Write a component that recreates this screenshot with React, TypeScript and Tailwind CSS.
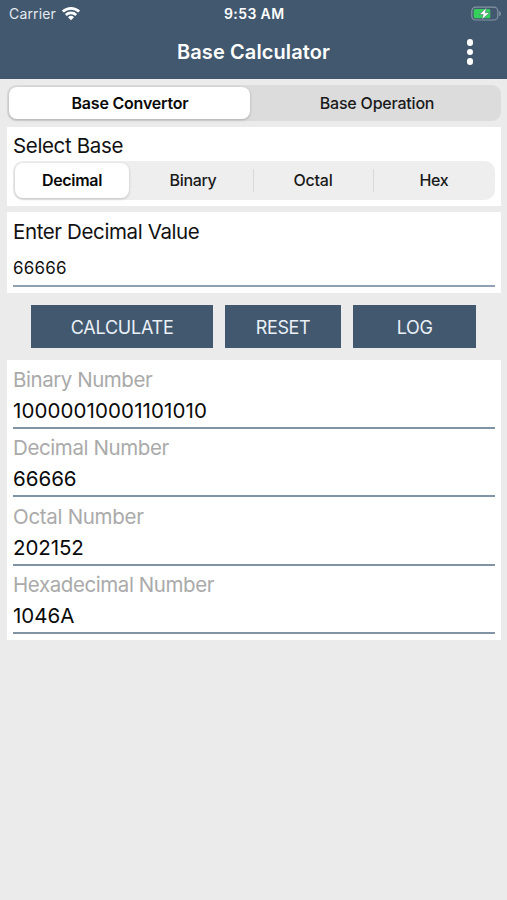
const results = [
  { label: 'Binary Number', value: '10000010001101010', labelTracking: 'tracking-[-0.45px]', valueTracking: 'tracking-[0.1px]' },
  { label: 'Decimal Number', value: '66666', labelTracking: 'tracking-[-0.4px]', valueTracking: 'tracking-[0px]' },
  { label: 'Octal Number', value: '202152', labelTracking: 'tracking-[-0.3px]', valueTracking: 'tracking-[-0.1px]' },
  { label: 'Hexadecimal Number', value: '1046A', labelTracking: 'tracking-[-0.42px]', valueTracking: 'tracking-[0px]' },
];

function WifiIcon() {
  return (
    <svg width="18" height="14" viewBox="0 0 18 14" fill="none" stroke="#fff" strokeWidth="2.7">
      <path d="M0.9 4.6a11.8 11.8 0 0 1 16.2 0" />
      <path d="M3.8 8a7.6 7.6 0 0 1 10.4 0" />
      <path d="M9 13.2 6 10.2a4.3 4.3 0 0 1 6 0Z" fill="#fff" stroke="none" />
    </svg>
  );
}

function BatteryIcon() {
  return (
    <svg width="31" height="16" viewBox="0 0 31 16">
      <rect x="0.8" y="1.2" width="26" height="12.8" rx="3.8" fill="none" stroke="#8494a4" strokeWidth="1.2" />
      <path d="M28.2 5c2.2.8 2.2 4.4 0 5.2Z" fill="#8494a4" />
      <rect x="2.7" y="3" width="16.6" height="9.2" rx="1.5" fill="#35d05b" />
      <path d="M15.4 1.8 8.4 8.5h3.8L10.8 13.6 18.6 6.7h-4.4Z" fill="#fff" stroke="#42586e" strokeWidth="0.5" />
    </svg>
  );
}

function StatusBar() {
  return (
    <div className="grid h-[27px] grid-cols-3 items-center pl-[9px] pr-[5.5px] text-[14px]">
      <div className="flex items-center gap-[6px] text-[#e3eaf1]">
        <span className="tracking-[0.15px]">Carrier</span>
        <WifiIcon />
      </div>
      <span className="pr-[2px] text-center font-semibold tracking-[0.4px]">9:53 AM</span>
      <div className="flex justify-end">
        <BatteryIcon />
      </div>
    </div>
  );
}

export default function App() {
  return (
    <div className="h-[900px] w-[507px] overflow-hidden bg-[#ebebeb] font-['Inter',sans-serif] text-black">
      <header className="h-[79px] bg-[#42586e] text-white">
        <StatusBar />
        <div className="relative flex h-[50px] items-center justify-center">
          <h1 className="text-[20px] font-semibold tracking-[0.1px]">Base Calculator</h1>
          <button className="absolute right-[34px] top-[12px] flex flex-col gap-[3px]" aria-label="Menu">
            <i className="size-[6.5px] rounded-full bg-white" />
            <i className="size-[6.5px] rounded-full bg-white" />
            <i className="size-[6.5px] rounded-full bg-white" />
          </button>
        </div>
      </header>

      <main className="flex flex-col pl-[7px] pr-[6px] pt-[6px]">
        <div className="grid h-[36px] grid-cols-[241px_1fr] rounded-[9px] bg-[#dcdcdc] p-[2px] text-[16px]">
          <button className="rounded-[8px] bg-white pl-px font-semibold tracking-[-0.2px] text-[#0a0a0a] shadow-[0_1px_3px_rgba(0,0,0,0.22)]">Base Convertor</button>
          <button className="pl-[5px] font-medium tracking-[-0.2px] text-[#1a1a1a]">Base Operation</button>
        </div>

        <section className="mt-[6px] h-[79px] bg-white px-[6px] pt-[5px]">
          <h2 className="h-[29px] text-[20.5px] leading-[28px] tracking-[-0.35px] text-[#111]">Select Base</h2>
          <div className="grid h-[39px] grid-cols-[120px_120px_120px_1fr] rounded-[10px] bg-[#eeeeee] text-[16px] font-medium text-[#1a1a1a]">
            <button className="my-[2px] ml-[2px] mr-[4px] rounded-[8px] bg-white pb-px font-semibold tracking-[-0.3px] text-[#0a0a0a] shadow-[0_1px_3px_rgba(0,0,0,0.2)]">Decimal</button>
            <button className="pb-px tracking-[-0.35px]">Binary</button>
            <div className="flex items-center">
              <i className="h-[23px] w-px bg-[#d8d8d8]" />
              <button className="flex-1 pb-px pr-px tracking-[-0.2px]">Octal</button>
            </div>
            <div className="flex items-center">
              <i className="h-[23px] w-px bg-[#d8d8d8]" />
              <button className="flex-1 pb-px pr-px tracking-[-0.3px]">Hex</button>
            </div>
          </div>
        </section>

        <section className="mt-[6px] h-[81px] bg-white px-[6px] pt-[5px]">
          <h2 className="text-[20.5px] leading-[29px] tracking-[-0.38px] text-[#111]">Enter Decimal Value</h2>
          <div className="h-[41px] border-b-2 border-[#8fa0b0] text-[17px] leading-[44px] tracking-[0.2px] text-[#111]">66666</div>
        </section>

        <div className="mt-[12px] flex h-[43px] gap-[12px] pl-[24.4px] text-[18px] text-[#e9f0f7]">
          <button className="w-[181.5px] bg-[#42586e] pt-px tracking-[-0.25px]">CALCULATE</button>
          <button className="w-[116.3px] bg-[#42586e] pt-px tracking-[-0.4px]">RESET</button>
          <button className="w-[123px] bg-[#42586e] pt-px tracking-[-0.4px]">LOG</button>
        </div>

        <section className="mt-[12px] h-[280px] bg-white px-[6px] pt-[0.7px]">
          {results.map((r) => (
            <div key={r.label} className="flex h-[68.3px] flex-col pt-[4.4px] text-[20.5px]">
              <div className={`h-[30.4px] leading-[29px] text-[#aaaaaa] ${r.labelTracking}`}>{r.label}</div>
              <div className={`leading-[32px] text-[#0a0a0a] ${r.valueTracking}`}>{r.value}</div>
              <div className="mt-auto h-[2px] bg-[#8194a6]" />
            </div>
          ))}
        </section>
      </main>
    </div>
  );
}
